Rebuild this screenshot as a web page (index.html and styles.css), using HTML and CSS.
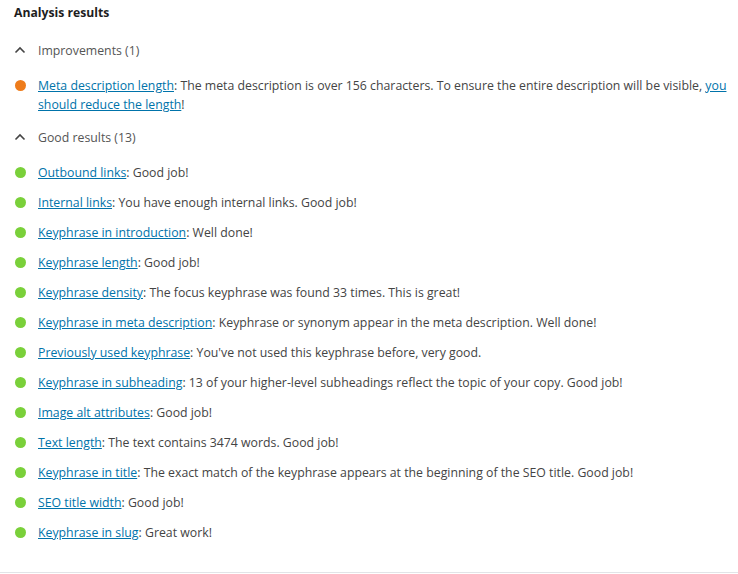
FILE: index.html
```html
<!DOCTYPE html>
<html>
<head>
<meta charset="utf-8">
<link rel="stylesheet" href="styles.css">
</head>
<body>
<div class="panel">
  <h2 class="title">Analysis results</h2>
  <div class="section">
    <div class="section-head">
      <svg class="chev" width="12" height="8" viewBox="0 0 12 8"><path d="M1.5 6.5 L6 2 L10.5 6.5" fill="none" stroke="#444" stroke-width="1.6"/></svg>
      <span>Improvements (1)</span>
    </div>
    <ul class="results">
      <li><span class="dot orange"></span><p><a href="#">Meta description length</a>: The meta description is over 156 characters. To ensure the entire description will be visible, <a href="#">you should reduce the length</a>!</p></li>
    </ul>
  </div>
  <div class="section second">
    <div class="section-head">
      <svg class="chev" width="12" height="8" viewBox="0 0 12 8"><path d="M1.5 6.5 L6 2 L10.5 6.5" fill="none" stroke="#444" stroke-width="1.6"/></svg>
      <span>Good results (13)</span>
    </div>
    <ul class="results">
      <li><span class="dot green"></span><p><a href="#">Outbound links</a>: Good job!</p></li>
      <li><span class="dot green"></span><p><a href="#">Internal links</a>: You have enough internal links. Good job!</p></li>
      <li><span class="dot green"></span><p><a href="#">Keyphrase in introduction</a>: Well done!</p></li>
      <li><span class="dot green"></span><p><a href="#">Keyphrase length</a>: Good job!</p></li>
      <li><span class="dot green"></span><p><a href="#">Keyphrase density</a>: The focus keyphrase was found 33 times. This is great!</p></li>
      <li><span class="dot green"></span><p><a href="#">Keyphrase in meta description</a>: Keyphrase or synonym appear in the meta description. Well done!</p></li>
      <li><span class="dot green"></span><p><a href="#">Previously used keyphrase</a>: You've not used this keyphrase before, very good.</p></li>
      <li><span class="dot green"></span><p><a href="#">Keyphrase in subheading</a>: 13 of your higher-level subheadings reflect the topic of your copy. Good job!</p></li>
      <li><span class="dot green"></span><p><a href="#">Image alt attributes</a>: Good job!</p></li>
      <li><span class="dot green"></span><p><a href="#">Text length</a>: The text contains 3474 words. Good job!</p></li>
      <li><span class="dot green"></span><p><a href="#">Keyphrase in title</a>: The exact match of the keyphrase appears at the beginning of the SEO title. Good job!</p></li>
      <li><span class="dot green"></span><p><a href="#">SEO title width</a>: Good job!</p></li>
      <li><span class="dot green"></span><p><a href="#">Keyphrase in slug</a>: Great work!</p></li>
    </ul>
  </div>
</div>
</body>
</html>
```
FILE: styles.css
```css
* { box-sizing: border-box; }
html, body { margin: 0; padding: 0; background: #fff; }
body {
  font-family: "Open Sans", "Noto Sans", sans-serif;
  font-size: 12.3px;
  color: #444;
  width: 738px;
  height: 574px;
  overflow: hidden;
}
.panel {
  padding: 3px 0 0 14px;
  height: 573px;
  border-bottom: 1px solid #e2e4e7;
}
.title {
  margin: 0;
  font-size: 12.2px;
  font-weight: 700;
  line-height: 20px;
  color: #1e1e1e;
}
.section-head {
  display: flex;
  align-items: center;
  gap: 12px;
  height: 20px;
  margin-top: 17px;
  color: #555;
}
.second .section-head { margin-top: 13px; }
.chev { flex: none; display: block; }
.results {
  list-style: none;
  margin: 16px 0 0 0;
  padding: 0;
  display: flex;
  flex-direction: column;
  gap: 11px;
}
.results li {
  display: flex;
  align-items: flex-start;
  gap: 12px;
}
.results p {
  margin: 0;
  line-height: 19px;
  padding-right: 8px;
}
.dot {
  flex: none;
  width: 11px;
  height: 11px;
  border-radius: 50%;
  margin-top: 4px;
  margin-left: 1px;
}
.orange { background: #ee7c1b; }
.green { background: #7ad03a; }
a { color: #0073aa; text-decoration: underline; }
```
